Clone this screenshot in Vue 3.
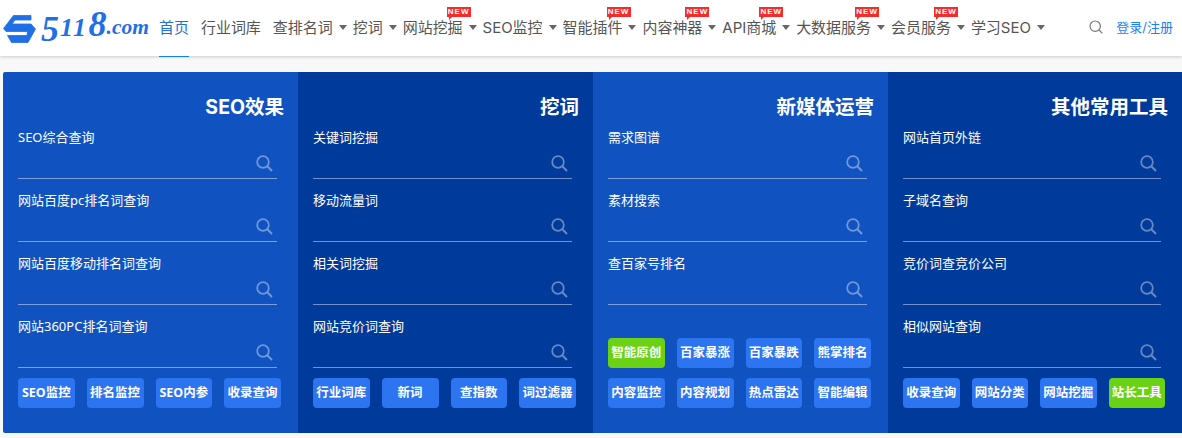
<script setup>
const navItems = [
  { name: '首页', active: true },
  { name: '行业词库' },
  { name: '查排名词', caret: true },
  { name: '挖词', caret: true },
  { name: '网站挖掘', caret: true, isNew: 44 },
  { name: 'SEO监控', caret: true },
  { name: '智能插件', caret: true, isNew: 44 },
  { name: '内容神器', caret: true, isNew: 43 },
  { name: 'API商城', caret: true, isNew: 37 },
  { name: '大数据服务', caret: true, isNew: 59 },
  { name: '会员服务', caret: true, isNew: 43 },
  { name: '学习SEO', caret: true },
]

const panels = [
  {
    title: 'SEO效果',
    fields: ['SEO综合查询', '网站百度pc排名词查询', '网站百度移动排名词查询', '网站360PC排名词查询'],
    buttons: [{ name: 'SEO监控' }, { name: '排名监控' }, { name: 'SEO内参' }, { name: '收录查询' }],
  },
  {
    title: '挖词',
    dark: true,
    fields: ['关键词挖掘', '移动流量词', '相关词挖掘', '网站竞价词查询'],
    buttons: [{ name: '行业词库' }, { name: '新词' }, { name: '查指数' }, { name: '词过滤器' }],
  },
  {
    title: '新媒体运营',
    fields: ['需求图谱', '素材搜索', '查百家号排名'],
    buttons: [
      { name: '智能原创', green: true },
      { name: '百家暴涨' },
      { name: '百家暴跌' },
      { name: '熊掌排名' },
      { name: '内容监控' },
      { name: '内容规划' },
      { name: '热点雷达' },
      { name: '智能编辑' },
    ],
  },
  {
    title: '其他常用工具',
    dark: true,
    fields: ['网站首页外链', '子域名查询', '竞价词查竞价公司', '相似网站查询'],
    buttons: [{ name: '收录查询' }, { name: '网站分类' }, { name: '网站挖掘' }, { name: '站长工具', green: true }],
  },
]
</script>

<template>
  <div class="page">
    <header class="header">
      <div class="logo">
        <svg class="logo-mark" viewBox="0 0 40 38" width="40" height="38">
          <path
            d="M31 5.5H13.5L3.5 18.5 6 21.5H27.5L27 25.5H7.5L11.5 32.5H28L35.5 19 31 14H12L15 10H31z"
            fill="#1f6fe6"
            stroke="#1f6fe6"
            stroke-width="0.8"
            stroke-linejoin="round"
          />
        </svg>
        <span class="logo-text"><span class="d-five">5</span><span class="d-one">11</span><span class="d-eight">8</span><span class="logo-com">.com</span></span>
      </div>
      <nav class="nav">
        <a
          v-for="item in navItems"
          :key="item.name"
          class="nav-item"
          :class="{ active: item.active, 'has-caret': item.caret }"
        >
          {{ item.name }}
          <i v-if="item.caret" class="caret"></i>
          <em v-if="item.isNew" class="badge" :style="{ left: item.isNew + 'px' }">NEW</em>
        </a>
      </nav>
      <div class="header-right">
        <svg class="header-search" viewBox="0 0 14 14" width="14" height="14">
          <circle cx="6.2" cy="6.2" r="5.2" fill="none" stroke="#777" stroke-width="1.2" />
          <path d="M10 10L13.4 13.4" stroke="#777" stroke-width="1.2" />
        </svg>
        <a class="login">登录/注册</a>
      </div>
    </header>

    <main class="panels">
      <section v-for="panel in panels" :key="panel.title" class="panel" :class="{ dark: panel.dark }">
        <h2 class="panel-title">{{ panel.title }}</h2>
        <div v-for="field in panel.fields" :key="field" class="field">
          <label class="field-label">{{ field }}</label>
          <div class="field-input">
            <svg viewBox="0 0 17 17" width="17" height="17">
              <circle cx="7" cy="7" r="5.8" fill="none" stroke="#fff" stroke-width="1.8" />
              <path d="M11.3 11.3L16 16" stroke="#fff" stroke-width="2" />
            </svg>
          </div>
        </div>
        <div class="buttons">
          <a v-for="btn in panel.buttons" :key="btn.name" class="btn" :class="{ green: btn.green }">{{ btn.name }}</a>
        </div>
      </section>
    </main>
  </div>
</template>

<style>
html, body {
  margin: 0;
  background: #f8f8f8;
}
</style>

<style scoped>
.page {
  width: 1182px;
  height: 438px;
  overflow: hidden;
  font-family: "Noto Sans", "Noto Sans CJK SC", sans-serif;
}
.header {
  height: 56px;
  display: flex;
  align-items: stretch;
  background: #fff;
  box-shadow: 0 1px 3px rgba(0, 0, 0, 0.18);
  position: relative;
}
.logo {
  width: 159px;
  display: flex;
  align-items: flex-start;
  color: #1f6fe6;
  font-family: "Liberation Serif", serif;
  font-style: italic;
  font-weight: bold;
}
.logo-mark {
  margin-top: 10px;
  flex: none;
}
.logo-text {
  margin-top: 3px;
  margin-left: 1px;
  line-height: 42px;
  white-space: nowrap;
}
.d-five {
  font-size: 36px;
  vertical-align: -5px;
}
.d-one {
  font-size: 26px;
  letter-spacing: 1.5px;
  margin-left: 1px;
}
.d-eight {
  font-size: 36px;
  margin-left: 1px;
}
.logo-com {
  font-size: 21.5px;
  vertical-align: 2px;
}
.nav {
  display: flex;
  align-items: stretch;
  font-family: Inter, "Noto Sans CJK SC", sans-serif;
  letter-spacing: -0.03px;
}
.nav-item {
  position: relative;
  display: flex;
  align-items: center;
  margin-right: 12px;
  font-size: 15px;
  color: #555;
  white-space: nowrap;
  padding-bottom: 3px;
  height: 53px;
}
.nav-item.has-caret {
  margin-right: 6px;
}
.nav-item.active {
  color: #1f6fd8;
  height: 57px;
  box-sizing: border-box;
  border-bottom: 1px solid #0f7ff5;
}
.caret {
  margin-left: 6px;
  margin-top: 1px;
  width: 0;
  height: 0;
  border-left: 4px solid transparent;
  border-right: 4px solid transparent;
  border-top: 5px solid #666;
}
.badge {
  position: absolute;
  top: 7px;
  width: 24px;
  height: 10px;
  background: #f42c2c;
  color: #fff;
  font-family: "Liberation Sans", sans-serif;
  font-style: normal;
  font-size: 8px;
  font-weight: bold;
  line-height: 10px;
  letter-spacing: 1px;
  text-align: center;
}
.badge::after {
  content: "";
  position: absolute;
  left: 2px;
  top: 10px;
  border-left: 3px solid #f42c2c;
  border-bottom: 3px solid transparent;
}
.header-right {
  margin-left: auto;
  padding: 0 9px 3px 0;
  display: flex;
  align-items: center;
  font-family: Inter, "Noto Sans CJK SC", sans-serif;
}
.header-search {
  margin-right: 13px;
}
.login {
  font-size: 13px;
  color: #1a7ff5;
}
.panels {
  margin: 16px 0 0 3px;
  height: 361px;
  display: grid;
  grid-template-columns: 295px 295px 295px 1fr;
  border-radius: 2px 0 0 2px;
  overflow: hidden;
}
.panel {
  display: flex;
  flex-direction: column;
  padding: 0 14px 25px 15px;
  background: #1053c0;
  color: #fff;
}
.panel.dark {
  background: #003a9a;
}
.panel-title {
  margin: 0;
  padding-top: 21px;
  height: 23px;
  font-family: Inter, "Noto Sans CJK SC", sans-serif;
  font-size: 19.5px;
  line-height: 28px;
  font-weight: bold;
  text-align: right;
}
.field {
  margin-right: 7px;
  border-bottom: 1px solid rgba(255, 255, 255, 0.45);
  padding-top: 11px;
}
.field-label {
  display: block;
  height: 21px;
  font-size: 13px;
  line-height: 20px;
}
.field-input {
  height: 30px;
  display: flex;
  align-items: center;
  justify-content: flex-end;
  padding-right: 4px;
}
.field-input svg {
  opacity: 0.4;
}
.buttons {
  margin-top: auto;
  margin-right: 3px;
  display: grid;
  grid-template-columns: repeat(4, 1fr);
  gap: 10px 12px;
}
.btn {
  height: 30px;
  border-radius: 4px;
  background: #2c74f0;
  font-size: 12.5px;
  font-weight: bold;
  line-height: 30px;
  text-align: center;
  white-space: nowrap;
}
.btn.green {
  background: #6bd114;
}
</style>
